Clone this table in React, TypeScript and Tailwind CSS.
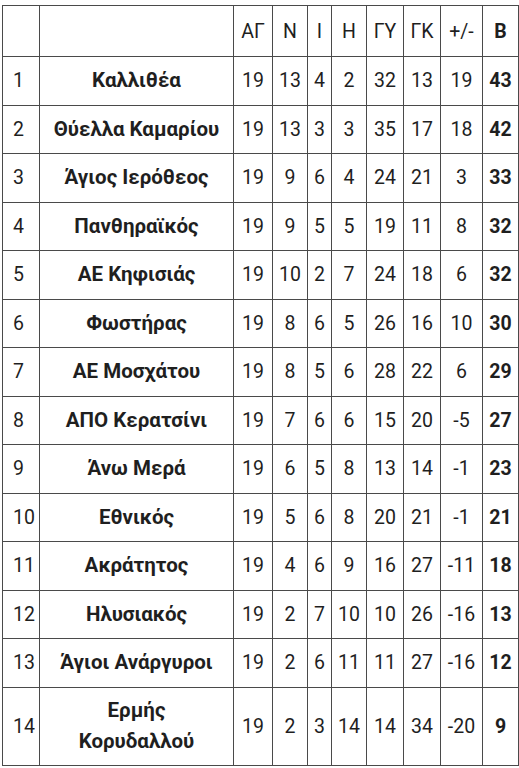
import React from "react";

const rows: [string, string, number, number, number, number, number, number, number, number][] = [
  ["1", "Καλλιθέα", 19, 13, 4, 2, 32, 13, 19, 43],
  ["2", "Θύελλα Καμαρίου", 19, 13, 3, 3, 35, 17, 18, 42],
  ["3", "Άγιος Ιερόθεος", 19, 9, 6, 4, 24, 21, 3, 33],
  ["4", "Πανθηραϊκός", 19, 9, 5, 5, 19, 11, 8, 32],
  ["5", "ΑΕ Κηφισιάς", 19, 10, 2, 7, 24, 18, 6, 32],
  ["6", "Φωστήρας", 19, 8, 6, 5, 26, 16, 10, 30],
  ["7", "ΑΕ Μοσχάτου", 19, 8, 5, 6, 28, 22, 6, 29],
  ["8", "ΑΠΟ Κερατσίνι", 19, 7, 6, 6, 15, 20, -5, 27],
  ["9", "Άνω Μερά", 19, 6, 5, 8, 13, 14, -1, 23],
  ["10", "Εθνικός", 19, 5, 6, 8, 20, 21, -1, 21],
  ["11", "Ακράτητος", 19, 4, 6, 9, 16, 27, -11, 18],
  ["12", "Ηλυσιακός", 19, 2, 7, 10, 10, 26, -16, 13],
  ["13", "Άγιοι Ανάργυροι", 19, 2, 6, 11, 11, 27, -16, 12],
  ["14", "Ερμής Κορυδαλλού", 19, 2, 3, 14, 14, 34, -20, 9],
];

const headers = ["ΑΓ", "Ν", "Ι", "Η", "ΓΥ", "ΓΚ", "+/-"];

export default function App() {
  return (
    <div className="bg-white w-[519px] h-[768px] pt-[5px] pl-[2px] overflow-hidden">
      <div
        className="grid w-[517px] gap-px p-px bg-[#4a4a4a] text-[#1f1f1f] text-[19.5px] leading-[31px]"
        style={{ fontFamily: "Roboto, 'Noto Sans', sans-serif" }}
      >
        <div
          className="grid gap-px"
          style={{
            gridTemplateColumns: "36px 193px 38px 34px 23px 34px 36px 36px 41px 35px",
            gridTemplateRows: "50px repeat(13, 47.5px) 77px",
          }}
        >
          <div className="bg-white" />
          <div className="bg-white" />
          {headers.map((h) => (
            <div key={h} className="bg-white flex items-center justify-center">
              {h}
            </div>
          ))}
          <div className="bg-white flex items-center justify-center font-bold">Β</div>
          {rows.map((r) => (
            <React.Fragment key={r[0]}>
              <div className="bg-white flex items-center pl-[10px]">{r[0]}</div>
              <div className="bg-white flex items-center justify-center text-center font-bold text-[20.5px] px-2">
                {r[0] === "14" ? (
                  <span>
                    Ερμής
                    <br />
                    Κορυδαλλού
                  </span>
                ) : (
                  r[1]
                )}
              </div>
              {r.slice(2, 9).map((v, i) => (
                <div key={i} className="bg-white flex items-center justify-center">
                  {v}
                </div>
              ))}
              <div className="bg-white flex items-center justify-center font-bold">{r[9]}</div>
            </React.Fragment>
          ))}
        </div>
      </div>
    </div>
  );
}
